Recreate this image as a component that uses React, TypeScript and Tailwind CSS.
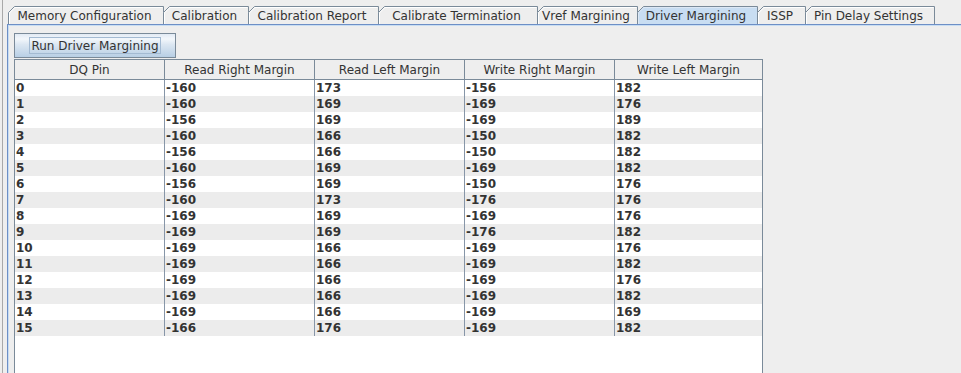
import React from "react";

const tabs = [
  { label: "Memory Configuration", w: 156 },
  { label: "Calibration", w: 86 },
  { label: "Calibration Report", w: 131 },
  { label: "Calibrate Termination", w: 160 },
  { label: "Vref Margining", w: 101 },
  { label: "Driver Margining", w: 121, selected: true },
  { label: "ISSP", w: 49 },
  { label: "Pin Delay Settings", w: 130 },
];

const headers = ["DQ Pin", "Read Right Margin", "Read Left Margin", "Write Right Margin", "Write Left Margin"];
const colW = [150, 150, 150, 150, 148];

const data: (string | number)[][] = [
  [0, -160, 173, -156, 182],
  [1, -160, 169, -169, 176],
  [2, -156, 169, -169, 189],
  [3, -160, 166, -150, 182],
  [4, -156, 166, -150, 182],
  [5, -160, 169, -169, 182],
  [6, -156, 169, -150, 176],
  [7, -160, 173, -176, 176],
  [8, -169, 169, -169, 176],
  [9, -169, 169, -176, 182],
  [10, -169, 166, -169, 176],
  [11, -169, 166, -169, 182],
  [12, -169, 166, -169, 176],
  [13, -169, 166, -169, 182],
  [14, -169, 166, -169, 169],
  [15, -166, 176, -169, 182],
];

function Tab({ label, w, selected, first }: { label: string; w: number; selected?: boolean; first: boolean }) {
  const h = 18;
  return (
    <div
      className={`relative h-[18px] flex items-center justify-center pr-[3px] text-[12px] text-[#333333] ${first ? "" : "-ml-px"}`}
      style={{ width: w }}
    >
      <svg className="absolute inset-0" width={w} height={h}>
        <path
          d={`M0.5,${h} L0.5,6.5 L6.5,0.5 L${w - 0.5},0.5 L${w - 0.5},${h}`}
          fill={selected ? "#c8ddf2" : "#eeeeee"}
          stroke="#7a8a99"
          strokeWidth={1}
        />
        <path
          d={`M1.5,${h} L1.5,6.9 L6.9,1.5 L${w - 1.5},1.5`}
          fill="none"
          stroke={selected ? "#dde8f5" : "#ffffff"}
          strokeWidth={1}
        />
      </svg>
      <span className="relative pt-[1px] leading-none">{label}</span>
    </div>
  );
}

export default function App() {
  return (
    <div
      className="w-[961px] h-[373px] bg-[#eeeeee] overflow-hidden flex"
      style={{ fontFamily: '"DejaVu Sans", "Liberation Sans", sans-serif' }}
    >
      <div className="ml-[2px] border-l border-[#a9a9a9] flex-1 flex flex-col min-w-0">
        <div className="h-[24px] flex items-end pl-[5px] shrink-0">
          {tabs.map((t, i) => (
            <Tab key={t.label} label={t.label} w={t.w} selected={t.selected} first={i === 0} />
          ))}
        </div>
        <div className="ml-[4px] flex-1 border-l border-t border-[#6d8fc6] min-h-0">
          <div className="h-full border-l border-t border-[#c8ddf2] pl-[5px] pt-[7px] flex flex-col">
            <button className="w-[162px] h-[25px] shrink-0 border border-[#7a8a99] bg-[linear-gradient(to_bottom,#e2eaf4_0%,#f3f7fb_22%,#dce7f2_45%,#b8cfe5_100%)] flex items-center justify-center text-[12px] text-[#333333]">
              <span className="border border-[#a3bad2] px-[1px] h-[17px] flex items-center leading-none">
                Run Driver Margining
              </span>
            </button>
            <div className="mt-[1px] w-[749px] flex-1 border-l border-t border-[#7a8a99] bg-white flex flex-col">
              <div className="flex h-[20px] shrink-0 bg-[#eeeeee]">
                {headers.map((h, i) => (
                  <div
                    key={h}
                    className="border-r border-b border-[#7a8a99] flex items-center justify-center text-[12px] text-[#333333] leading-none"
                    style={{ width: colW[i] }}
                  >
                    {h}
                  </div>
                ))}
              </div>
              <div className="flex-1 border-r border-[#7a8a99] w-[748px]">
                {data.map((row, r) => (
                  <div key={r} className={`flex h-[16px] ${r % 2 === 1 ? "bg-[#ececec]" : "bg-white"}`}>
                    {row.map((v, c) => (
                      <div
                        key={c}
                        className={`h-[16px] flex items-center pl-[1px] text-[12px] font-bold text-[#333333] leading-none ${c < 4 ? "border-r border-[#8796a8]" : ""}`}
                        style={{ width: c < 4 ? colW[c] : 147 }}
                      >
                        {v}
                      </div>
                    ))}
                  </div>
                ))}
              </div>
            </div>
          </div>
        </div>
      </div>
    </div>
  );
}
